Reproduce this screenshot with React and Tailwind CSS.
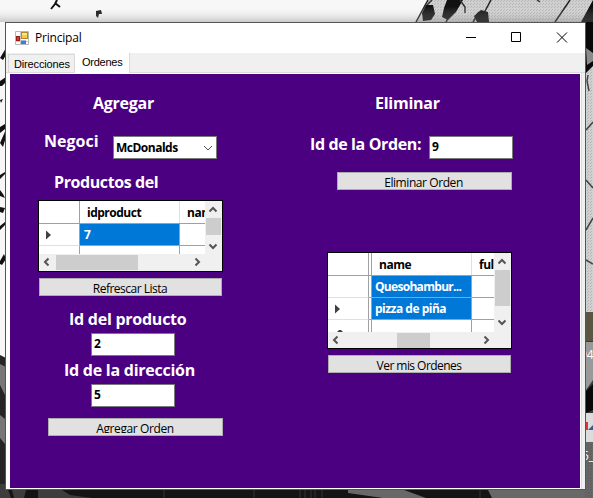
import React from 'react';

const headingBase = "font-['Open_Sans',sans-serif] text-[16px] font-bold leading-6 text-white whitespace-nowrap";
const heading = `${headingBase} tracking-[-0.25px]`;
const bold = "font-['Open_Sans',sans-serif] text-[12px] font-bold tracking-[-0.5px] whitespace-nowrap";

function Backdrop() {
  return (
    <svg className="absolute inset-0" width="593" height="498" viewBox="0 0 593 498">
      <defs>
        <linearGradient id="shade" x1="0" y1="0" x2="0" y2="1">
          <stop offset="0.3" stopColor="#fff" stopOpacity="0" />
          <stop offset="1" stopColor="#777" stopOpacity="0.35" />
        </linearGradient>
        <pattern id="grain" width="3" height="3" patternUnits="userSpaceOnUse">
          <path d="M0 0h1v1H0zM2 1h1v1H2z" fill="#000" opacity="0.13" />
        </pattern>
      </defs>
      <rect width="593" height="498" fill="#f7f7f7" />
      <path d="M428 0H593V330H560V22H416z" fill="#d0d0d0" />
      <rect x="428" width="165" height="330" fill="url(#grain)" />
      {/* ink strokes along the top edge */}
      <path d="M57 0L55 4L51 9M55 3L60 7" stroke="#111" strokeWidth="2" fill="none" />
      <path d="M96 11l5-1 1 4-3 0-1 4-2-2z" fill="#111" />
      <path d="M416 22L428 0M446 22L458 0M473 22L479 12M484 13L491 0M555 22L570 0" stroke="#222" strokeWidth="1.5" fill="none" />
      <path d="M422 13l4-8 7 0 2 9-4 6-8 1zM444 8l3-8h16l-7 12-8 8-6-3zM474 16l7-6 7 2 1 10h-12z" fill="#111" />
      <path d="M460 0l5 7 0 6M427 5l5-5M537 0l3 2" stroke="#333" strokeWidth="1.5" fill="none" />
      <path d="M593 0L581 22H585V74L593 66z" fill="#090909" />
      <path d="M586 48l7 5v8l-6 4z" fill="#8b8b8b" />
      <path d="M586 130l7-8M588 75l-1 6 2 10M586 180l7 8M586 230l7-12M586 260l7 4" stroke="#444" strokeWidth="1.5" fill="none" />
      <rect width="593" height="22" fill="url(#shade)" />
      {/* ink strokes along the left edge */}
      <path d="M0 58l6-10v7l-3 5zM0 81l6-4v5l-4 4H0zM0 100l3-1-2 4zM0 127l5-3v5l-5 4zM0 143l4-9 2-5v8l-3 10zM0 175l5-3v2l-5 5zM0 190l3 4 2 4-5-2zM0 207l5 1-2 5-3-1zM0 226l5-4v3l-5 5zM0 261l4-7 2 5-4 6-2-1z" fill="#111" />
      {/* lower part of the wallpaper */}
      <path d="M0 355L6 358V498H0z" fill="#252525" />
      <path d="M0 364l6 3v30l-6-12zM0 415l5 4v25l-5-6z" fill="#777" />
      <rect y="488" width="593" height="10" fill="#141414" />
      <path d="M0 484h6l5 14H0zM12 490h14l-2 8H14zM38 490h24l8 5 22 3H38z" fill="#3d3d3d" />
      <path d="M348 490h56l22 8h-43l-35-5zM488 490h105v8H492z" fill="#686868" />
      <path d="M164 490v8M254 490v8M300 490v8M305 490v8M311 490v8M315 490v8M322 490v8M480 490v8" stroke="#333" />
      <rect x="586" y="312" width="7" height="30" fill="#5b5544" />
      <rect x="586" y="341" width="7" height="72" fill="#3a3a3a" />
      <path d="M586 342h7v38l-7 10z" fill="#999" />
      <path d="M586 391l7-7v26l-7 3z" fill="#090909" />
      <rect x="585" y="413" width="8" height="29" fill="#dcdcdc" />
      <path d="M586 422h2v8h-2z" fill="#d03a3a" />
      <path d="M588 430l5-5v5z" fill="#3a5a8c" />
      <rect x="585" y="442" width="8" height="56" fill="#676767" />
      <rect x="585" y="442" width="8" height="56" fill="url(#grain)" />
      <text x="580" y="359" fill="#fff" fontFamily="Open Sans, sans-serif" fontSize="12">94</text>
      <text x="582" y="460" fill="#fff" fontFamily="Open Sans, sans-serif" fontSize="12">5_</text>
    </svg>
  );
}

function AppIcon() {
  return (
    <svg width="14" height="14" viewBox="0 0 14 14">
      <path d="M0.5 0.5h13v13h-13z" fill="#fff" stroke="#b8b8b8" />
      <path d="M5.5 0v14M0 10.5h14" stroke="#c8c8c8" />
      <rect x="6.5" y="1.5" width="6" height="6" fill="#fbc93d" stroke="#b28a1d" />
      <path d="M7 2h5v2H7z" fill="#ffe58c" />
      <rect x="1.5" y="5.5" width="3" height="4" fill="#d8392b" stroke="#9c1d18" />
      <rect x="6" y="9" width="5" height="4" fill="#3f7be0" />
      <path d="M6 9h5v1H6z" fill="#8cb8f6" />
    </svg>
  );
}

const arrows = {
  up: 'M1.5 6.5L5 3L8.5 6.5',
  down: 'M1.5 3.5L5 7L8.5 3.5',
  left: 'M6.5 1.5L3 5L6.5 8.5',
  right: 'M3.5 1.5L7 5L3.5 8.5',
};

function Arrow({ dir }) {
  return (
    <svg className="shrink-0" width="10" height="10" viewBox="0 0 10 10">
      <path d={arrows[dir]} fill="none" stroke="#555" strokeWidth="2" />
    </svg>
  );
}

function RowMarker() {
  return (
    <svg className="ml-[7px]" width="6" height="10" viewBox="0 0 6 10">
      <path d="M0 0.5L5 5L0 9.5z" fill="#404040" />
    </svg>
  );
}

function Button({ className, textClass, children }) {
  return (
    <div className={`flex h-[18px] justify-center overflow-hidden border border-[#adadad] bg-[#e1e1e1] ${className}`}>
      <span className={`font-['Open_Sans',sans-serif] text-[12px] leading-4 whitespace-nowrap text-black ${textClass}`}>{children}</span>
    </div>
  );
}

function Input({ className, children }) {
  return (
    <div className={`h-[23px] w-[84px] border border-[#7a7a7a] bg-white pl-0.5 leading-[19px] ${bold} ${className}`}>{children}</div>
  );
}

function ProductGrid() {
  return (
    <div className="mt-[6px] ml-[28px] flex h-[72px] w-[185px] flex-col border border-black bg-[#f0f0f0]">
      <div className="flex h-[53px]">
        <div className="w-[166px] overflow-hidden bg-white">
          <div className="flex h-[23px] w-[200px] border-b border-[#a0a0a0]">
            <div className="w-[41px] border-r border-[#a0a0a0]" />
            <div className={`w-[100px] border-r border-[#e0e0e0] pl-[7px] leading-[23px] ${bold}`}>idproduct</div>
            <div className={`pl-[7px] leading-[23px] ${bold}`}>name</div>
          </div>
          <div className="flex h-[22px] w-[200px]">
            <div className="flex w-[41px] items-center border-r border-b border-r-[#a0a0a0] border-b-[#e0e0e0]"><RowMarker /></div>
            <div className={`w-[100px] border-r border-b border-[#a0a0a0] bg-[#0078d7] pl-1 leading-[21px] text-white ${bold}`}>7</div>
            <div className="flex-1 border-b border-[#a0a0a0]" />
          </div>
          <div className="flex h-2 w-[200px]">
            <div className="w-[41px] border-r border-[#a0a0a0]" />
            <div className="w-[100px] border-r border-[#a0a0a0]" />
          </div>
        </div>
        <div className="flex w-[16px] flex-col items-center pt-1">
          <Arrow dir="up" />
          <div className="mt-[3px] mb-[6px] h-[17px] w-[15px] bg-[#cdcdcd]" />
          <Arrow dir="down" />
        </div>
      </div>
      <div className="flex h-[16px] items-center pl-[3px]">
        <Arrow dir="left" />
        <div className="ml-1 h-[15px] w-[82px] bg-[#cdcdcd]" />
        <div className="ml-[54px] flex"><Arrow dir="right" /></div>
      </div>
    </div>
  );
}

function OrderRow({ marker, text, tracking }) {
  return (
    <div className="flex h-[22px] w-[200px]">
      <div className="flex w-[41px] items-center border-r border-b border-r-[#a0a0a0] border-b-[#e0e0e0]">{marker && <RowMarker />}</div>
      <div className="w-[2px] border-b border-[#a0a0a0]" />
      <div className={`w-[101px] border border-t-0 border-[#a0a0a0] bg-[#0078d7] pl-[3px] font-['Open_Sans',sans-serif] text-[12px] leading-[22px] font-bold whitespace-nowrap text-white ${tracking}`}>{text}</div>
      <div className="flex-1 border-b border-[#a0a0a0]" />
    </div>
  );
}

function OrderGrid() {
  return (
    <div className="mt-[62px] ml-[37px] flex h-[97px] w-[185px] flex-col border border-black bg-[#f0f0f0]">
      <div className="flex h-[79px]">
        <div className="w-[166px] overflow-hidden bg-white">
          <div className="flex h-[23px] w-[200px] border-b border-[#a0a0a0]">
            <div className="w-[41px] border-r border-[#a0a0a0]" />
            <div className="w-[2px]" />
            <div className={`w-[101px] border-x border-l-[#a0a0a0] border-r-[#e0e0e0] pl-[7px] leading-[23px] ${bold}`}>name</div>
            <div className={`pl-[7px] leading-[23px] ${bold}`}>ful</div>
          </div>
          <OrderRow text="Quesohambur..." tracking="tracking-[-0.7px]" />
          <OrderRow marker text="pizza de piña" tracking="tracking-[-0.5px]" />
          <div className="flex h-3 w-[200px]">
            <div className="flex w-[41px] items-end overflow-hidden border-r border-[#a0a0a0] pl-2">
              <svg width="8" height="3" viewBox="0 0 8 3"><path d="M1 3L3 1h2l2 2z" fill="#404040" /></svg>
            </div>
            <div className="w-[2px]" />
            <div className="w-[101px] border-x border-[#a0a0a0]" />
          </div>
        </div>
        <div className="flex w-[16px] flex-col items-center pt-1">
          <Arrow dir="up" />
          <div className="mt-[3px] mb-[11px] h-[36px] w-[15px] bg-[#cdcdcd]" />
          <Arrow dir="down" />
        </div>
      </div>
      <div className="flex h-[16px] items-center pl-[3px]">
        <Arrow dir="left" />
        <div className="ml-[56px] h-[15px] w-[33px] bg-[#cdcdcd]" />
        <div className="ml-[51px] flex"><Arrow dir="right" /></div>
      </div>
    </div>
  );
}

function TitleBar() {
  return (
    <div className="flex h-[30px] items-center bg-white pl-[9px]">
      <AppIcon />
      <span className="ml-[6px] font-['Open_Sans',sans-serif] text-[12px] tracking-[-0.2px]">Principal</span>
      <svg className="ml-auto" width="120" height="30" viewBox="0 0 120 30" fill="none" stroke="#000">
        <path d="M1 14.5h10M46.5 9.5h9v9h-9zM92 9.5l10 10M102 9.5l-10 10" />
      </svg>
    </div>
  );
}

function Tabs() {
  return (
    <div className="flex h-5 items-end border-b border-[#dcdcdc] bg-[#f0f0f0] pl-[2px] font-['Liberation_Sans',sans-serif] text-[11px] text-black">
      <div className="h-[18px] w-[67px] border border-b-0 border-[#d9d9d9] pl-[5px] leading-[19px] tracking-[-0.15px]">Direcciones</div>
      <div className="-mb-px h-5 w-[55px] border-r border-[#d9d9d9] bg-white pl-[7px] leading-[18px] tracking-[-0.25px]">Ordenes</div>
    </div>
  );
}

export default function App() {
  return (
    <div className="relative h-[498px] w-[593px] overflow-hidden">
      <Backdrop />
      <div className="relative mt-[22px] ml-[5px] flex h-[468px] w-[581px] flex-col border border-[#555] bg-[#f0f0f0]">
        <TitleBar />
        <Tabs />
        <div className="mr-[3px] flex-1 border-r border-[#dcdcdc] bg-white pt-px pr-px pb-px pl-1">
          <div className="flex h-full bg-[#4b0082] pt-[17px]">
            <div className="w-[280px]">
              <div className={`ml-[83px] ${heading}`}>Agregar</div>
              <div className="mt-[14px] flex h-[31px]">
                <div className={`ml-[34px] w-[69px] ${headingBase}`}>Negoci</div>
                <div className="mt-[7px] flex h-[23px] w-[104px] items-center justify-between border border-[#7a7a7a] bg-white pr-[3px] pl-0.5">
                  <span className={`leading-[19px] ${bold}`}>McDonalds</span>
                  <svg width="10" height="6" viewBox="0 0 10 6"><path d="M1 1L5 5L9 1" fill="none" stroke="#555" /></svg>
                </div>
              </div>
              <div className={`mt-[10px] ml-[44px] tracking-[-0.4px] ${headingBase}`}>Productos del</div>
              <ProductGrid />
              <Button className="mt-[6px] ml-[29px] w-[183px]" textClass="pt-[2px] pr-px tracking-[-0.5px]">Refrescar Lista</Button>
              <div className={`mt-[11px] ml-[59px] ${heading}`}>Id del producto</div>
              <Input className="mt-[2px] ml-[81px]">2</Input>
              <div className={`mt-[2px] ml-[54px] ${heading}`}>Id de la dirección</div>
              <Input className="mt-[2px] ml-[81px]">5</Input>
              <Button className="mt-[11px] ml-[38px] w-[175px] pb-[2px]" textClass="h-[14px] overflow-hidden pt-[2px] pr-px tracking-[-0.4px]">Agregar Orden</Button>
            </div>
            <div className="w-[290px]">
              <div className={`ml-[85px] ${heading}`}>Eliminar</div>
              <div className="mt-[17px] flex h-[28px]">
                <div className={`ml-[20px] w-[119px] tracking-[-0.37px] ${headingBase}`}>Id de la Orden:</div>
                <Input className="mt-[4px]">9</Input>
              </div>
              <Button className="mt-[12px] ml-[47px] w-[175px]" textClass="pt-[2px] pr-[2px] tracking-[-0.42px]">Eliminar Orden</Button>
              <OrderGrid />
              <Button className="mt-[6px] ml-[38px] w-[183px]" textClass="pt-[2px] pr-px tracking-[-0.55px]">Ver mis Ordenes</Button>
            </div>
          </div>
        </div>
      </div>
    </div>
  );
}
